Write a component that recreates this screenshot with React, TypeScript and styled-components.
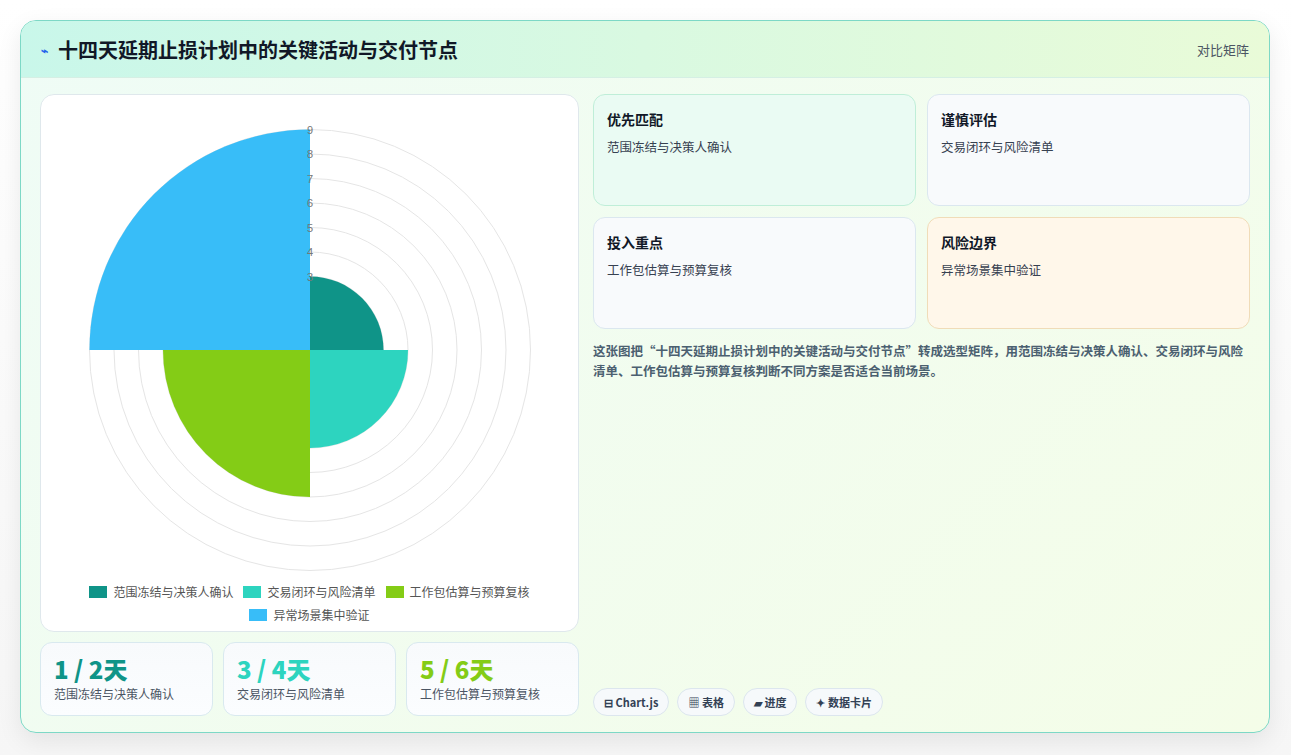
import styled, { createGlobalStyle } from "styled-components";

const GlobalStyle = createGlobalStyle`
  body {
    margin: 0;
    background: #ffffff;
    font-family: "Noto Sans CJK SC", "Noto Sans", sans-serif;
  }
`;

const colors = ["#0f9488", "#2dd4bf", "#84cc16", "#38bdf8"];
const labels = ["范围冻结与决策人确认", "交易闭环与风险清单", "工作包估算与预算复核", "异常场景集中验证"];
const values = [3, 4, 6, 9];

const Page = styled.div`
  width: 1291px;
  height: 755px;
  padding: 20px;
  box-sizing: border-box;
  background: linear-gradient(180deg, #ffffff 0%, #f6f6f6 100%);
`;

const Card = styled.div`
  width: 1250px;
  height: 713px;
  box-sizing: border-box;
  border: 1px solid #7dd8c6;
  border-radius: 16px;
  overflow: hidden;
  background: linear-gradient(135deg, #effcf6 0%, #f4fde8 100%);
  box-shadow: 0 8px 24px rgba(0, 0, 0, 0.08);
  display: flex;
  flex-direction: column;
`;

const Header = styled.div`
  height: 56px;
  flex: none;
  display: flex;
  align-items: center;
  justify-content: space-between;
  padding: 0 20px;
  background: linear-gradient(90deg, #c9f7ea 0%, #e9fbd8 100%);
  border-bottom: 1px solid #d5efe4;
`;

const Title = styled.h1`
  margin: 0;
  font-size: 20px;
  font-weight: 700;
  color: #111827;
  display: flex;
  align-items: center;
  gap: 10px;
`;

const Tag = styled.span`
  font-size: 13px;
  color: #4b5563;
`;

const Body = styled.div`
  flex: 1;
  display: grid;
  grid-template-columns: 539px 1fr;
  gap: 14px;
  padding: 16px 19px 18px 19px;
`;

const LeftCol = styled.div`
  display: flex;
  flex-direction: column;
  gap: 10px;
`;

const ChartCard = styled.div`
  height: 538px;
  box-sizing: border-box;
  background: #fff;
  border: 1px solid #dfe8ec;
  border-radius: 14px;
  display: flex;
  flex-direction: column;
  align-items: center;
  padding-top: 14px;
`;

const Legend = styled.div`
  width: 460px;
  display: flex;
  flex-wrap: wrap;
  justify-content: center;
  column-gap: 10px;
  row-gap: 6px;
  margin-top: 4px;
`;

const LegendItem = styled.div`
  display: flex;
  align-items: center;
  gap: 6px;
  font-size: 12px;
  color: #555;
`;

const Swatch = styled.span<{ $c: string }>`
  width: 18px;
  height: 12px;
  background: ${(p) => p.$c};
`;

const Stats = styled.div`
  display: grid;
  grid-template-columns: repeat(3, 1fr);
  gap: 10px;
`;

const Stat = styled.div`
  height: 74px;
  box-sizing: border-box;
  background: linear-gradient(180deg, #f8fafc, #fbfdff);
  border: 1px solid #d9e9ef;
  border-radius: 12px;
  padding: 10px 13px;
`;

const StatNum = styled.div<{ $c: string }>`
  font-size: 24px;
  font-weight: 800;
  line-height: 32px;
  color: ${(p) => p.$c};
`;

const StatLabel = styled.div`
  font-size: 12px;
  color: #4b5563;
`;

const RightCol = styled.div`
  display: flex;
  flex-direction: column;
`;

const Grid = styled.div`
  display: grid;
  grid-template-columns: 1fr 1fr;
  grid-auto-rows: 112px;
  gap: 11px 11px;
`;

const Tile = styled.div<{ $bg: string; $bd: string }>`
  background: ${(p) => p.$bg};
  border: 1px solid ${(p) => p.$bd};
  border-radius: 12px;
  padding: 14px 13px;
`;

const TileTitle = styled.div`
  font-size: 14px;
  font-weight: 700;
  color: #111827;
  margin-bottom: 8px;
`;

const TileText = styled.div`
  font-size: 12.5px;
  color: #374151;
`;

const Desc = styled.p`
  margin: 12px 0 0;
  font-size: 12.5px;
  line-height: 20px;
  font-weight: 600;
  color: #4b6070;
`;

const Chips = styled.div`
  margin-top: auto;
  display: flex;
  gap: 8px;
`;

const Chip = styled.span`
  height: 28px;
  box-sizing: border-box;
  padding: 0 10px;
  display: inline-flex;
  align-items: center;
  gap: 4px;
  border: 1px solid #dce6ee;
  border-radius: 14px;
  background: #f6f9fb;
  font-size: 11px;
  font-weight: 700;
  color: #334155;
`;

const PolarChart = () => {
  const cx = 268, cy = 241, u = 24.5;
  const starts = [0, 90, 180, 270];
  const arc = (v: number, s: number) => {
    const r = v * u;
    const a0 = ((s - 90) * Math.PI) / 180;
    const a1 = ((s) * Math.PI) / 180;
    return `M${cx},${cy} L${cx + r * Math.cos(a0)},${cy + r * Math.sin(a0)} A${r},${r} 0 0 1 ${cx + r * Math.cos(a1)},${cy + r * Math.sin(a1)} Z`;
  };
  return (
    <svg width="536" height="470">
      {[1, 2, 3, 4, 5, 6, 7, 8, 9].map((i) => (
        <circle key={i} cx={cx} cy={cy} r={i * u} fill="none" stroke="#e5e5e5" />
      ))}
      {values.map((v, i) => (
        <path key={i} d={arc(v, starts[i])} fill={colors[i]} />
      ))}
      {[3, 4, 5, 6, 7, 8, 9].map((i) => (
        <text key={i} x={cx} y={cy - i * u + 4} fontSize="11" fill="#777" textAnchor="middle" fontFamily="Liberation Sans, sans-serif">
          {i}
        </text>
      ))}
    </svg>
  );
};

export default function App() {
  return (
    <>
      <GlobalStyle />
      <Page>
        <Card>
          <Header>
            <Title>
              <span style={{ fontSize: 12, color: "#2563eb" }}>⌁</span>
              十四天延期止损计划中的关键活动与交付节点
            </Title>
            <Tag>对比矩阵</Tag>
          </Header>
          <Body>
            <LeftCol>
              <ChartCard>
                <PolarChart />
                <Legend>
                  {labels.map((l, i) => (
                    <LegendItem key={l}>
                      <Swatch $c={colors[i]} />
                      {l}
                    </LegendItem>
                  ))}
                </Legend>
              </ChartCard>
              <Stats>
                {[0, 1, 2].map((i) => (
                  <Stat key={i}>
                    <StatNum $c={colors[i]}>{`${i * 2 + 1} / ${i * 2 + 2}天`}</StatNum>
                    <StatLabel>{labels[i]}</StatLabel>
                  </Stat>
                ))}
              </Stats>
            </LeftCol>
            <RightCol>
              <Grid>
                <Tile $bg="#eafbf3" $bd="#bfeed8">
                  <TileTitle>优先匹配</TileTitle>
                  <TileText>范围冻结与决策人确认</TileText>
                </Tile>
                <Tile $bg="#f8fafc" $bd="#dbe7ef">
                  <TileTitle>谨慎评估</TileTitle>
                  <TileText>交易闭环与风险清单</TileText>
                </Tile>
                <Tile $bg="#f8fafc" $bd="#dbe7ef">
                  <TileTitle>投入重点</TileTitle>
                  <TileText>工作包估算与预算复核</TileText>
                </Tile>
                <Tile $bg="#fff7ea" $bd="#f0dcb8">
                  <TileTitle>风险边界</TileTitle>
                  <TileText>异常场景集中验证</TileText>
                </Tile>
              </Grid>
              <Desc>
                这张图把“十四天延期止损计划中的关键活动与交付节点”转成选型矩阵，用范围冻结与决策人确认、交易闭环与风险清单、工作包估算与预算复核判断不同方案是否适合当前场景。
              </Desc>
              <Chips>
                <Chip>⊟ Chart.js</Chip>
                <Chip>▦ 表格</Chip>
                <Chip>▰ 进度</Chip>
                <Chip>✦ 数据卡片</Chip>
              </Chips>
            </RightCol>
          </Body>
        </Card>
      </Page>
    </>
  );
}
